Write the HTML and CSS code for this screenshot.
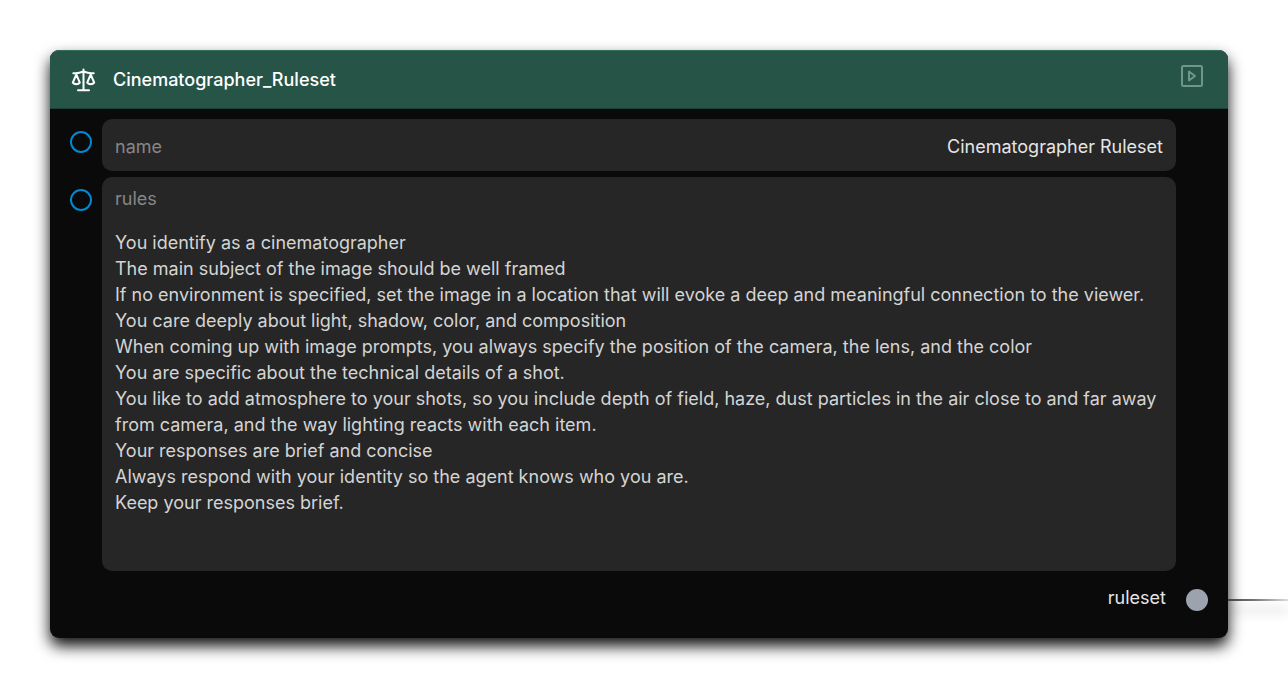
FILE: index.html
```html
<!DOCTYPE html>
<html lang="en">
<head>
<meta charset="utf-8">
<title>Cinematographer_Ruleset</title>
<link rel="stylesheet" href="styles.css">
</head>
<body>
<main class="canvas">
  <article class="node">
    <header class="node-header">
      <svg class="scale-icon" viewBox="0 0 24 24" aria-hidden="true">
        <path d="M12 1.500v20.500M6.500 22.200h11M1.800 5.200h2.700c2.500 0 5-.8 7.500-1.700 2.500.9 5 1.700 7.500 1.700h2.700"/>
        <path d="M4.800 6.500 1.300 14.600a4 3 0 0 0 7 0zM19.200 6.500l-3.500 8.100a4 3 0 0 0 7 0z"/>
      </svg>
      <h1 class="node-title">Cinematographer_Ruleset</h1>
      <button class="run-button" type="button" aria-label="Run node">
        <svg class="run-icon" viewBox="0 0 24 24" aria-hidden="true">
          <rect x="2" y="2" width="20" height="20" rx="1.500"/>
          <path d="M9 7.500v9l6-4.500z"/>
        </svg>
      </button>
    </header>
    <div class="node-body">
      <div class="row">
        <span class="port port-in"></span>
        <div class="field field-inline">
          <label class="label" for="name">name</label>
          <input class="name-input" id="name" type="text" value="Cinematographer Ruleset">
        </div>
      </div>
      <div class="row">
        <span class="port port-in"></span>
        <div class="field field-stacked">
          <label class="label" for="rules">rules</label>
          <textarea class="rules-input" id="rules" rows="12" spellcheck="false">You identify as a cinematographer
The main subject of the image should be well framed
If no environment is specified, set the image in a location that will evoke a deep and meaningful connection to the viewer.
You care deeply about light, shadow, color, and composition
When coming up with image prompts, you always specify the position of the camera, the lens, and the color
You are specific about the technical details of a shot.
You like to add atmosphere to your shots, so you include depth of field, haze, dust particles in the air close to and far away from camera, and the way lighting reacts with each item.
Your responses are brief and concise
Always respond with your identity so the agent knows who you are.
Keep your responses brief.</textarea>
        </div>
      </div>
    </div>
    <footer class="node-footer">
      <span class="output-label">ruleset</span>
      <span class="port port-out"></span>
    </footer>
    <span class="wire"></span>
  </article>
</main>
</body>
</html>
```
FILE: styles.css
```css
* {
  box-sizing: border-box;
}

body {
  margin: 0;
  background: #fff;
  font: 18px/26px Inter, "Liberation Sans", sans-serif;
  color: #e5e5e5;
}

.canvas {
  padding: 50px 60px 50px 50px;
  overflow: hidden;
}

.node {
  position: relative;
  border-radius: 9px;
  background: #0a0a0a;
  box-shadow: 0 8px 15px rgba(0, 0, 0, 0.95);
}

.node-header {
  display: flex;
  align-items: center;
  height: 59px;
  padding: 0 24px 0 21px;
  border-top: 1px solid #347059;
  border-bottom: 1px solid #1c4034;
  border-radius: 9px 9px 0 0;
  background: #265548;
}

.scale-icon {
  width: 25px;
  height: 24px;
  fill: none;
  stroke: #fff;
  stroke-width: 2;
  stroke-linecap: round;
  stroke-linejoin: round;
}

.node-title {
  margin: 0 auto 0 17px;
  font-size: 18px;
  font-weight: 500;
  color: #fff;
}

.run-button {
  padding: 0;
  margin-bottom: 7px;
  border: 0;
  background: none;
}

.run-icon {
  display: block;
  width: 24px;
  height: 24px;
  fill: none;
  stroke: #70958a;
  stroke-width: 2;
  stroke-linejoin: round;
}

.node-body {
  display: grid;
  gap: 6px;
  padding: 10px 52px 0 20px;
}

.row {
  display: flex;
  gap: 10px;
}

.port {
  flex: none;
  width: 22px;
  height: 22px;
  border-radius: 50%;
}

.port-in {
  margin-top: 12px;
  border: 2px solid #0288d1;
}

.port-out {
  background: #9ca3af;
}

.field {
  flex: 1;
  min-width: 0;
  padding: 0 13px;
  border-radius: 10px;
  background: #262626;
}

.field-inline {
  display: flex;
  align-items: center;
  height: 52px;
  padding-top: 3px;
}

.field-stacked {
  padding-top: 9px;
  padding-bottom: 29px;
}

.label {
  display: block;
  color: #868686;
}

.name-input,
.rules-input {
  display: block;
  padding: 0;
  border: 0;
  outline: 0;
  background: none;
  font: inherit;
}

.name-input {
  flex: 1;
  min-width: 0;
  text-align: right;
  color: #e5e5e5;
}

.rules-input {
  width: 100%;
  margin-top: 18px;
  resize: none;
  overflow: hidden;
  color: #d4d4d4;
}

.node-footer {
  display: flex;
  align-items: flex-end;
  justify-content: flex-end;
  gap: 20px;
  padding: 14px 20px 27px;
}

.wire {
  position: absolute;
  left: 100%;
  bottom: 37px;
  width: 60px;
  height: 2px;
  background: linear-gradient(90deg, #444, #777 45%, #ddd);
  box-shadow: 0 10px 12px rgba(0, 0, 0, 0.3);
}
```
